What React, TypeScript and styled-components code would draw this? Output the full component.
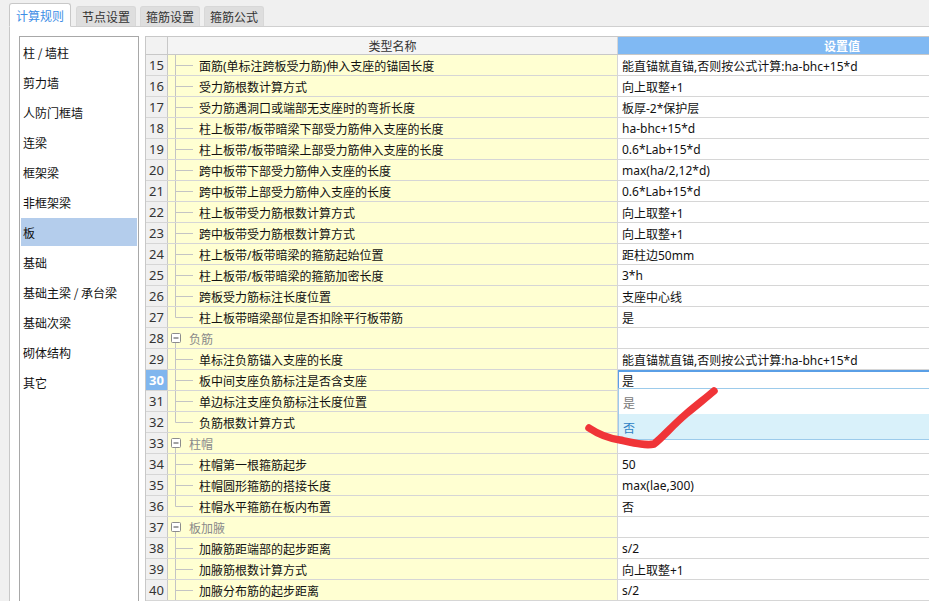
import React from "react";
import styled, { createGlobalStyle } from "styled-components";

const Global = createGlobalStyle`
  html, body { margin: 0; padding: 0; background: #f0f0f0; }
  body { font-family: "Noto Sans", "Noto Sans CJK SC", sans-serif; font-size: 12px; color: #111; }
  * { box-sizing: border-box; }
`;

const Page = styled.div`
  width: 929px;
  height: 601px;
  overflow: hidden;
  display: flex;
  flex-direction: column;
  position: relative;
  background: #f0f0f0;
`;

const TabBar = styled.div`
  height: 26px;
  flex: none;
  display: flex;
  align-items: flex-end;
  padding-left: 9px;
  gap: 4px;
`;

const Tab = styled.div<{ $active?: boolean }>`
  position: relative;
  z-index: 1;
  height: ${(p) => (p.$active ? "24px" : "20px")};
  margin-bottom: ${(p) => (p.$active ? "-1px" : "0")};
  padding: 0 ${(p) => (p.$active ? "6px" : "5px")};
  display: flex;
  align-items: center;
  font-family: "Noto Sans CJK SC", sans-serif;
  font-size: 12px;
  color: ${(p) => (p.$active ? "#3d8ee6" : "#333")};
  background: ${(p) => (p.$active ? "#fff" : "#dedede")};
  border: 1px solid ${(p) => (p.$active ? "#c8c8c8" : "#d8d8d8")};
  border-bottom: ${(p) => (p.$active ? "1px solid #fff" : "none")};
  border-radius: 3px 3px 0 0;
  margin-right: ${(p) => (p.$active ? "1px" : "0")};
`;

const Panel = styled.div`
  flex: 1;
  min-height: 0;
  margin-left: 9px;
  background: #fff;
  border-left: 1px solid #c8c8c8;
  border-top: 1px solid #d0d0d0;
  padding: 9px 0 0 9px;
  display: flex;
  gap: 6px;
  overflow: hidden;
`;

const Sidebar = styled.div`
  flex: none;
  width: 120px;
  height: 600px;
  border: 1px solid #a8a8a8;
  background: #fff;
  display: flex;
  flex-direction: column;
`;

const SideItem = styled.div<{ $selected?: boolean }>`
  height: 28px;
  margin: 1px;
  padding-left: 2px;
  display: flex;
  align-items: center;
  font-family: "Noto Sans CJK SC", sans-serif;
  font-size: 12px;
  color: #111;
  white-space: nowrap;
  background: ${(p) => (p.$selected ? "#b4cdec" : "transparent")};
`;

const Table = styled.div`
  flex: none;
  width: 924px;
  border-left: 1px solid #c8c8c8;
  border-top: 1px solid #c8c8c8;
  display: flex;
  flex-direction: column;
`;

const HeaderRow = styled.div`
  display: flex;
  height: 21px;
  border-bottom: 1px solid #c8c8c8;
`;

const Row = styled.div`
  display: flex;
  height: 21px;
  border-bottom: 1px solid #d6d6d6;
`;

const NumCell = styled.div<{ $selected?: boolean; $header?: boolean }>`
  flex: none;
  width: 22px;
  border-right: 1px solid #c8c8c8;
  padding-top: ${(p) => (p.$header ? "0" : "1px")};
  display: flex;
  align-items: center;
  justify-content: center;
  font-family: "Noto Sans", sans-serif;
  font-size: 13px;
  line-height: 19px;
  color: ${(p) => (p.$selected ? "#fff" : "#333")};
  font-weight: ${(p) => (p.$selected ? 700 : 400)};
  background: ${(p) => (p.$selected ? "#80b6ee" : p.$header ? "#f2f2f2" : "#f0f0f0")};
`;

const HeadName = styled.div`
  flex: none;
  width: 450px;
  border-right: 1px solid #d6d6d6;
  background: #f4f4f4;
  display: flex;
  align-items: center;
  justify-content: center;
  font-family: "Noto Sans CJK SC", sans-serif;
  font-size: 12px;
  color: #333;
`;

const HeadValue = styled.div`
  flex: none;
  width: 448px;
  background: #80b9f3;
  display: flex;
  align-items: center;
  justify-content: center;
  font-family: "Noto Sans CJK SC", sans-serif;
  font-size: 12px;
  font-weight: 700;
  color: #fff;
`;

const NameCell = styled.div`
  flex: none;
  width: 450px;
  border-right: 1px solid #d6d6d6;
  background: #ffffd2;
  display: flex;
  align-items: stretch;
  white-space: nowrap;
  overflow: hidden;
`;

const Gutter = styled.svg`
  flex: none;
  display: block;
`;

const NameText = styled.span<{ $group?: boolean }>`
  display: flex;
  align-items: center;
  padding-top: 1px;
  font-family: "Noto Sans", "Noto Sans CJK SC", sans-serif;
  font-size: 12px;
  color: ${(p) => (p.$group ? "#8a8a8a" : "#111")};
`;

const ValueCell = styled.div<{ $editing?: boolean }>`
  flex: none;
  width: 448px;
  position: relative;
  background: #fff;
  padding: 1px 0 0 4px;
  display: flex;
  align-items: center;
  font-family: "Noto Sans", "Noto Sans CJK SC", sans-serif;
  font-size: 12px;
  color: #111;
  white-space: nowrap;
  box-shadow: ${(p) =>
    p.$editing ? "inset 0 2px 0 #5a9fe6, inset 1px 0 0 #5a9fe6" : "none"};
`;

const Dropdown = styled.div`
  position: absolute;
  z-index: 5;
  top: 18px;
  left: 0;
  width: 448px;
  background: #fff;
  border: 1px solid #9ccbeb;
  display: flex;
  flex-direction: column;
`;

const Option = styled.div<{ $hover?: boolean }>`
  height: 25px;
  padding: 1px 0 0 4px;
  display: flex;
  align-items: center;
  font-family: "Noto Sans CJK SC", sans-serif;
  font-size: 12px;
  color: ${(p) => (p.$hover ? "#2f7fc4" : "#777")};
  background: ${(p) => (p.$hover ? "#d9f1fa" : "#fff")};
`;

const Scribble = styled.svg`
  position: absolute;
  left: 0;
  top: 0;
  z-index: 10;
  pointer-events: none;
`;

type R = { n: number; kind: "item" | "group"; name: string; value?: string; last?: boolean };

const rows: R[] = [
  { n: 15, kind: "item", name: "面筋(单标注跨板受力筋)伸入支座的锚固长度", value: "能直锚就直锚,否则按公式计算:ha-bhc+15*d" },
  { n: 16, kind: "item", name: "受力筋根数计算方式", value: "向上取整+1" },
  { n: 17, kind: "item", name: "受力筋遇洞口或端部无支座时的弯折长度", value: "板厚-2*保护层" },
  { n: 18, kind: "item", name: "柱上板带/板带暗梁下部受力筋伸入支座的长度", value: "ha-bhc+15*d" },
  { n: 19, kind: "item", name: "柱上板带/板带暗梁上部受力筋伸入支座的长度", value: "0.6*Lab+15*d" },
  { n: 20, kind: "item", name: "跨中板带下部受力筋伸入支座的长度", value: "max(ha/2,12*d)" },
  { n: 21, kind: "item", name: "跨中板带上部受力筋伸入支座的长度", value: "0.6*Lab+15*d" },
  { n: 22, kind: "item", name: "柱上板带受力筋根数计算方式", value: "向上取整+1" },
  { n: 23, kind: "item", name: "跨中板带受力筋根数计算方式", value: "向上取整+1" },
  { n: 24, kind: "item", name: "柱上板带/板带暗梁的箍筋起始位置", value: "距柱边50mm" },
  { n: 25, kind: "item", name: "柱上板带/板带暗梁的箍筋加密长度", value: "3*h" },
  { n: 26, kind: "item", name: "跨板受力筋标注长度位置", value: "支座中心线" },
  { n: 27, kind: "item", name: "柱上板带暗梁部位是否扣除平行板带筋", value: "是", last: true },
  { n: 28, kind: "group", name: "负筋" },
  { n: 29, kind: "item", name: "单标注负筋锚入支座的长度", value: "能直锚就直锚,否则按公式计算:ha-bhc+15*d" },
  { n: 30, kind: "item", name: "板中间支座负筋标注是否含支座", value: "是" },
  { n: 31, kind: "item", name: "单边标注支座负筋标注长度位置", value: "" },
  { n: 32, kind: "item", name: "负筋根数计算方式", value: "", last: true },
  { n: 33, kind: "group", name: "柱帽" },
  { n: 34, kind: "item", name: "柱帽第一根箍筋起步", value: "50" },
  { n: 35, kind: "item", name: "柱帽圆形箍筋的搭接长度", value: "max(lae,300)" },
  { n: 36, kind: "item", name: "柱帽水平箍筋在板内布置", value: "否", last: true },
  { n: 37, kind: "group", name: "板加腋" },
  { n: 38, kind: "item", name: "加腋筋距端部的起步距离", value: "s/2" },
  { n: 39, kind: "item", name: "加腋筋根数计算方式", value: "向上取整+1" },
  { n: 40, kind: "item", name: "加腋分布筋的起步距离", value: "s/2" },
];

const sideItems = [
  "柱 / 墙柱",
  "剪力墙",
  "人防门框墙",
  "连梁",
  "框架梁",
  "非框架梁",
  "板",
  "基础",
  "基础主梁 / 承台梁",
  "基础次梁",
  "砌体结构",
  "其它",
];

const LINE = "#c4c4c4";

function ChildGutter({ last }: { last?: boolean }) {
  return (
    <Gutter width={31} height={20} viewBox="0 0 31 20">
      <line x1={7.5} y1={0} x2={7.5} y2={last ? 10.5 : 20} stroke={LINE} strokeWidth={1} />
      <line x1={7.5} y1={10.5} x2={25} y2={10.5} stroke={LINE} strokeWidth={1} />
    </Gutter>
  );
}

function GroupGutter() {
  return (
    <Gutter width={21} height={20} viewBox="0 0 21 20">
      <line x1={7.5} y1={15} x2={7.5} y2={20} stroke={LINE} strokeWidth={1} />
      <rect x={3.5} y={5.5} width={9} height={9} rx={1} fill="#fff" stroke="#8c8c8c" strokeWidth={1} />
      <line x1={5.5} y1={10} x2={10.5} y2={10} stroke="#444" strokeWidth={1} />
    </Gutter>
  );
}

export default function App() {
  return (
    <>
      <Global />
      <Page>
        <TabBar>
          <Tab $active>计算规则</Tab>
          <Tab>节点设置</Tab>
          <Tab>箍筋设置</Tab>
          <Tab>箍筋公式</Tab>
        </TabBar>
        <Panel>
          <Sidebar>
            {sideItems.map((s) => (
              <SideItem key={s} $selected={s === "板"}>
                {s}
              </SideItem>
            ))}
          </Sidebar>
          <Table>
            <HeaderRow>
              <NumCell $header />
              <HeadName>类型名称</HeadName>
              <HeadValue>设置值</HeadValue>
            </HeaderRow>
            {rows.map((r) => (
              <Row key={r.n}>
                <NumCell $selected={r.n === 30}>{r.n}</NumCell>
                <NameCell>
                  {r.kind === "group" ? <GroupGutter /> : <ChildGutter last={r.last} />}
                  <NameText $group={r.kind === "group"}>{r.name}</NameText>
                </NameCell>
                <ValueCell $editing={r.n === 30}>
                  {r.value}
                  {r.n === 30 && (
                    <Dropdown>
                      <Option>是</Option>
                      <Option $hover>否</Option>
                    </Dropdown>
                  )}
                </ValueCell>
              </Row>
            ))}
          </Table>
        </Panel>
        <Scribble width={929} height={601} viewBox="0 0 929 601">
          <path
            d="M589 428 C 598 434, 606 438, 620 440 C 634 443, 646 446, 654 444 C 662 438, 672 426, 686 414 C 698 404, 707 397, 714 391"
            fill="none"
            stroke="#f03438"
            strokeWidth={7.5}
            strokeLinecap="round"
            strokeLinejoin="round"
          />
        </Scribble>
      </Page>
    </>
  );
}
